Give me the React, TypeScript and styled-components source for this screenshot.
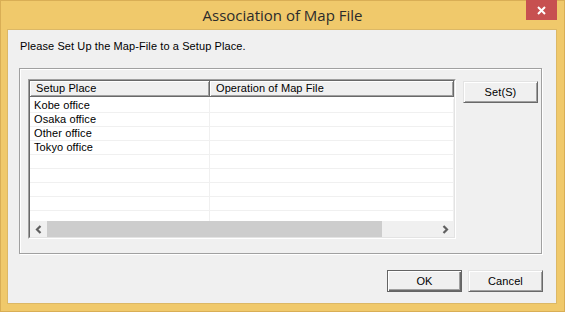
import React from "react"
import styled, { createGlobalStyle } from "styled-components"

const GlobalStyle = createGlobalStyle`
  html, body {
    margin: 0;
    padding: 0;
    background: #f0c96b;
  }
  * {
    box-sizing: border-box;
  }
`

const rows = ["Kobe office", "Osaka office", "Other office", "Tokyo office", "", "", "", "", ""]

const App = () => {
  return (
    <Window>
      <GlobalStyle />
      <TitleBar>
        <span />
        <Title>Association of Map File</Title>
        <CloseButton>
          <svg width="9" height="9" viewBox="0 0 9 9">
            <path d="M1 1 L8 8 M8 1 L1 8" stroke="#fff" strokeWidth="2" />
          </svg>
        </CloseButton>
      </TitleBar>
      <Client>
        <Prompt>Please Set Up the Map-File to a Setup Place.</Prompt>
        <GroupBox>
          <ListFrame>
            <ListInner>
              <Header>
                <HeaderCell $width={180}>Setup Place</HeaderCell>
                <HeaderCell $width={244}>Operation of Map File</HeaderCell>
              </Header>
              <Body>
                {rows.map((name, i) => (
                  <Row key={i}>
                    <Cell $width={180}>{name}</Cell>
                    <Cell $width={244} />
                  </Row>
                ))}
              </Body>
              <ScrollBar>
                <ArrowButton>
                  <svg width="7" height="9" viewBox="0 0 7 9">
                    <path d="M5.5 1 L2 4.5 L5.5 8" stroke="#606060" strokeWidth="2.2" fill="none" />
                  </svg>
                </ArrowButton>
                <Track>
                  <Thumb />
                </Track>
                <ArrowButton>
                  <svg width="7" height="9" viewBox="0 0 7 9">
                    <path d="M1.5 1 L5 4.5 L1.5 8" stroke="#606060" strokeWidth="2.2" fill="none" />
                  </svg>
                </ArrowButton>
              </ScrollBar>
            </ListInner>
          </ListFrame>
          <SideColumn>
            <Button>Set(S)</Button>
          </SideColumn>
        </GroupBox>
        <Footer>
          <Button $default>OK</Button>
          <Button>Cancel</Button>
        </Footer>
      </Client>
    </Window>
  )
}

const Window = styled.div`
  width: 565px;
  height: 312px;
  display: flex;
  flex-direction: column;
  padding: 0 7px 7px 6px;
  border: 1px solid #d9ae55;
  background: #f0c96b;
`

const TitleBar = styled.div`
  height: 28px;
  display: grid;
  grid-template-columns: 1fr auto 1fr;
  align-items: start;
`

const Title = styled.div`
  font-family: "Open Sans", "Noto Sans", sans-serif;
  font-size: 15px;
  line-height: 28px;
  color: #2b2b2b;
  margin-left: 1px;
`

const CloseButton = styled.div`
  justify-self: end;
  width: 31px;
  height: 20px;
  margin-top: -1px;
  background: #c75050;
  display: flex;
  align-items: center;
  justify-content: center;
`

const Client = styled.div`
  flex: 1;
  display: flex;
  flex-direction: column;
  border: 1px solid #dcb866;
  background: #f0f0f0;
  font-family: "Liberation Sans", Arial, sans-serif;
  font-size: 11px;
  letter-spacing: 0.1px;
  color: #000;
`

const Prompt = styled.div`
  padding: 10px 0 0 12px;
  line-height: 13px;
`

const GroupBox = styled.div`
  margin: 15px 0 0 11px;
  width: 523px;
  height: 186px;
  border: 1px solid #a0a0a0;
  box-shadow: inset 1px 1px 0 #fff, 1px 1px 0 #fff;
  display: flex;
  align-items: flex-start;
  padding: 10px 0 0 8px;
`

const ListFrame = styled.div`
  width: 428px;
  height: 160px;
  border-style: solid;
  border-width: 1px;
  border-color: #a0a0a0 #fff #fff #a0a0a0;
`

const ListInner = styled.div`
  height: 100%;
  display: flex;
  flex-direction: column;
  border-style: solid;
  border-width: 1px;
  border-color: #696969 #e3e3e3 #e3e3e3 #696969;
  background: #fff;
`

const Header = styled.div`
  display: flex;
  height: 17px;
  flex: none;
  background: #fff;
`

const HeaderCell = styled.div<{ $width: number }>`
  width: ${(p) => p.$width}px;
  height: 16px;
  padding: 0 0 0 6px;
  line-height: 15px;
  background: #f0f0f0;
  border-right: 1px solid #696969;
  border-bottom: 1px solid #696969;
  box-shadow: inset 1px 1px 0 #fff, inset -1px -1px 0 #a0a0a0;
  white-space: nowrap;
  overflow: hidden;
`

const Body = styled.div`
  flex: 1;
  overflow: hidden;
  padding-top: 1px;
`

const Row = styled.div`
  display: flex;
  height: 14px;
  border-bottom: 1px solid #f0f0f0;
`

const Cell = styled.div<{ $width: number }>`
  width: ${(p) => p.$width}px;
  padding-left: 4px;
  line-height: 13px;
  border-right: 1px solid #f0f0f0;
  white-space: nowrap;
`

const ScrollBar = styled.div`
  display: flex;
  height: 16px;
  flex: none;
  background: #f0f0f0;
`

const ArrowButton = styled.div`
  width: 17px;
  display: flex;
  align-items: center;
  justify-content: center;
  background: #f0f0f0;
`

const Track = styled.div`
  flex: 1;
  display: flex;
`

const Thumb = styled.div`
  width: 335px;
  background: #cdcdcd;
`

const SideColumn = styled.div`
  margin: 2px 0 0 7px;
`

const Button = styled.div<{ $default?: boolean }>`
  width: 75px;
  height: 22px;
  display: flex;
  align-items: center;
  justify-content: center;
  background: #f0f0f0;
  font-family: "Liberation Sans", Arial, sans-serif;
  font-size: 11px;
  color: #000;
  border-style: solid;
  border-width: 1px;
  border-color: ${(p) => (p.$default ? "#646464" : "#e3e3e3 #696969 #696969 #e3e3e3")};
  box-shadow: ${(p) =>
    p.$default
      ? "inset 1px 1px 0 #fff, inset -1px -1px 0 #696969, inset -2px -2px 0 #a0a0a0"
      : "inset 1px 1px 0 #fff, inset -1px -1px 0 #a0a0a0"};
`

const Footer = styled.div`
  display: flex;
  justify-content: flex-end;
  gap: 6px;
  margin: 16px 13px 0 0;
`

export default App
